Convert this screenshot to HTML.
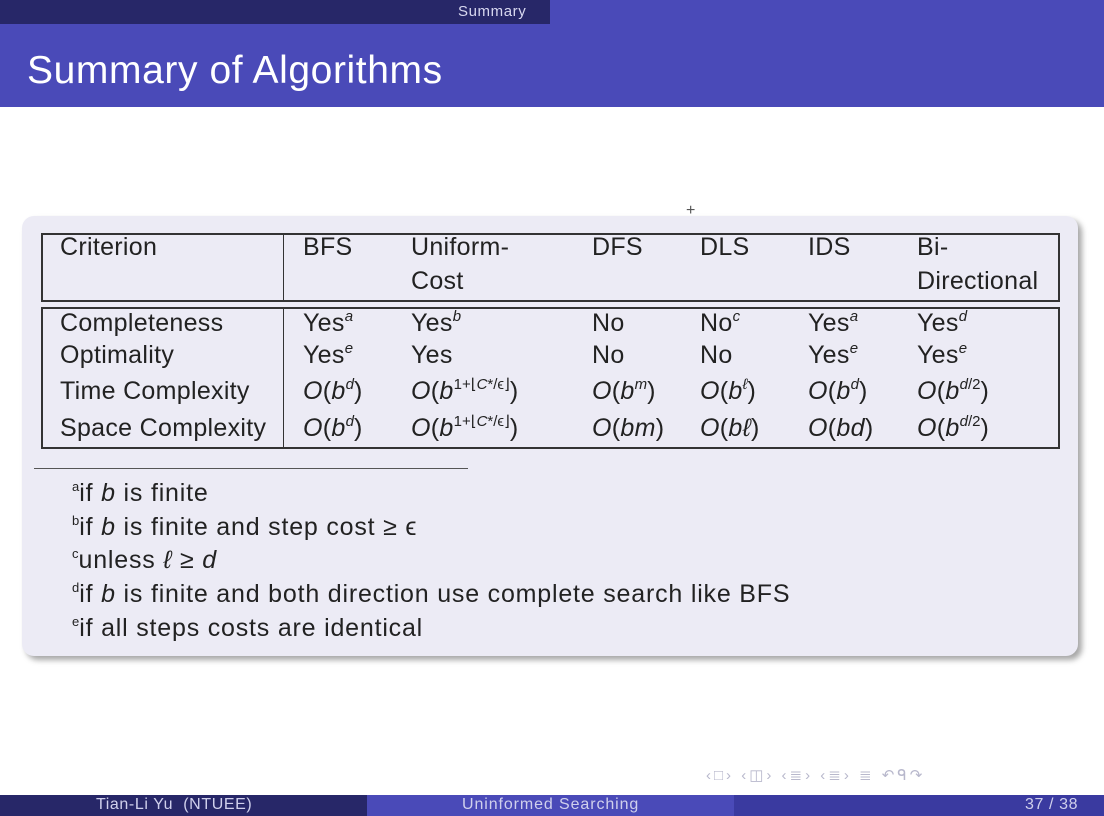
<!DOCTYPE html>
<html><head><meta charset="utf-8"><style>
body{margin:0;width:1104px;height:816px;position:relative;overflow:hidden;background:#fff;font-family:"Liberation Sans",sans-serif;color:#222;}
.a{position:absolute;white-space:nowrap;line-height:1;}
.t{font-size:25px;letter-spacing:0.3px;}
sup{font-size:15px;vertical-align:0;position:relative;top:-10px;letter-spacing:0;}
i{font-style:italic;}
.ln{position:absolute;background:#333;}
.f{letter-spacing:0.8px;}
</style></head><body>
<div class="a" style="left:0;top:0;width:550px;height:24px;background:#272768"></div>
<div class="a" style="left:550px;top:0;width:554px;height:24px;background:#4a4ab8"></div>
<div class="a" style="left:458px;top:4px;font-size:15px;color:#d8d8f0;letter-spacing:0.6px">Summary</div>
<div class="a" style="left:0;top:24px;width:1104px;height:83px;background:#4a4ab8"></div>
<div class="a" style="left:27px;top:51px;font-size:39px;color:#fff;letter-spacing:0.6px">Summary of Algorithms</div>

<div class="a" style="left:22px;top:216px;width:1056px;height:440px;background:#ecebf5;border-radius:12px;box-shadow:4px 4px 6px rgba(0,0,0,0.35)"></div>
<div class="a" style="left:686px;top:203px;font-size:16px;color:#555">+</div>

<div class="a" style="left:41px;top:233px;width:1015px;height:65px;border:2px solid #333"></div>
<div class="a" style="left:41px;top:307px;width:1015px;height:138px;border:2px solid #333"></div>
<div class="ln" style="left:283px;top:233px;width:1px;height:67px"></div>
<div class="ln" style="left:283px;top:307px;width:1px;height:140px"></div>

<div class="t">
<div class="a" style="left:60px;top:235px">Criterion</div>
<div class="a" style="left:303px;top:235px">BFS</div>
<div class="a" style="left:411px;top:235px">Uniform-</div>
<div class="a" style="left:411px;top:269px">Cost</div>
<div class="a" style="left:592px;top:235px">DFS</div>
<div class="a" style="left:700px;top:235px">DLS</div>
<div class="a" style="left:808px;top:235px">IDS</div>
<div class="a" style="left:917px;top:235px">Bi-</div>
<div class="a" style="left:917px;top:269px">Directional</div>

<div class="a" style="left:60px;top:311px">Completeness</div>
<div class="a" style="left:60px;top:343px">Optimality</div>
<div class="a" style="left:60px;top:379px">Time Complexity</div>
<div class="a" style="left:60px;top:416px">Space Complexity</div>

<div class="a" style="left:303px;top:311px">Yes<sup><i>a</i></sup></div>
<div class="a" style="left:411px;top:311px">Yes<sup><i>b</i></sup></div>
<div class="a" style="left:592px;top:311px">No</div>
<div class="a" style="left:700px;top:311px">No<sup><i>c</i></sup></div>
<div class="a" style="left:808px;top:311px">Yes<sup><i>a</i></sup></div>
<div class="a" style="left:917px;top:311px">Yes<sup><i>d</i></sup></div>

<div class="a" style="left:303px;top:343px">Yes<sup><i>e</i></sup></div>
<div class="a" style="left:411px;top:343px">Yes</div>
<div class="a" style="left:592px;top:343px">No</div>
<div class="a" style="left:700px;top:343px">No</div>
<div class="a" style="left:808px;top:343px">Yes<sup><i>e</i></sup></div>
<div class="a" style="left:917px;top:343px">Yes<sup><i>e</i></sup></div>

<div class="a" style="left:303px;top:379px"><i>O</i>(<i>b</i><sup><i>d</i></sup>)</div>
<div class="a" style="left:411px;top:379px"><i>O</i>(<i>b</i><sup>1+⌊<i>C</i>*/ϵ⌋</sup>)</div>
<div class="a" style="left:592px;top:379px"><i>O</i>(<i>b</i><sup><i>m</i></sup>)</div>
<div class="a" style="left:700px;top:379px"><i>O</i>(<i>b</i><sup><i>ℓ</i></sup>)</div>
<div class="a" style="left:808px;top:379px"><i>O</i>(<i>b</i><sup><i>d</i></sup>)</div>
<div class="a" style="left:917px;top:379px"><i>O</i>(<i>b</i><sup><i>d</i>/2</sup>)</div>

<div class="a" style="left:303px;top:416px"><i>O</i>(<i>b</i><sup><i>d</i></sup>)</div>
<div class="a" style="left:411px;top:416px"><i>O</i>(<i>b</i><sup>1+⌊<i>C</i>*/ϵ⌋</sup>)</div>
<div class="a" style="left:592px;top:416px"><i>O</i>(<i>bm</i>)</div>
<div class="a" style="left:700px;top:416px"><i>O</i>(<i>bℓ</i>)</div>
<div class="a" style="left:808px;top:416px"><i>O</i>(<i>bd</i>)</div>
<div class="a" style="left:917px;top:416px"><i>O</i>(<i>b</i><sup><i>d</i>/2</sup>)</div>

<div class="ln" style="left:34px;top:468px;width:434px;height:1px;background:#555"></div>
<div class="f">
<div class="a" style="left:72px;top:481px"><sup style="font-size:13px">a</sup>if <i>b</i> is finite</div>
<div class="a" style="left:72px;top:515px"><sup style="font-size:13px">b</sup>if <i>b</i> is finite and step cost ≥ ϵ</div>
<div class="a" style="left:72px;top:548px"><sup style="font-size:13px">c</sup>unless <i>ℓ</i> ≥ <i>d</i></div>
<div class="a" style="left:72px;top:582px"><sup style="font-size:13px">d</sup>if <i>b</i> is finite and both direction use complete search like BFS</div>
<div class="a" style="left:72px;top:616px"><sup style="font-size:13px">e</sup>if all steps costs are identical</div>
</div>
</div>

<div class="a" style="left:706px;top:768px;font-size:15px;color:#b8b8cc;letter-spacing:3px">‹□› ‹◫› ‹≣› ‹≣›  ≣  ↶ᑫ↷</div>

<div class="a" style="left:0;top:795px;width:367px;height:21px;background:#272768"></div>
<div class="a" style="left:367px;top:795px;width:367px;height:21px;background:#4a4ab8"></div>
<div class="a" style="left:734px;top:795px;width:370px;height:21px;background:#3a3aa0"></div>
<div class="a" style="left:96px;top:797px;font-size:16px;color:#d0d0ec;letter-spacing:0.6px">Tian-Li Yu&nbsp; (NTUEE)</div>
<div class="a" style="left:462px;top:797px;font-size:16px;color:#d0d0ec;letter-spacing:0.9px">Uninformed Searching</div>
<div class="a" style="left:1025px;top:797px;font-size:16px;color:#d0d0ec;letter-spacing:0.6px">37 / 38</div>
</body></html>
